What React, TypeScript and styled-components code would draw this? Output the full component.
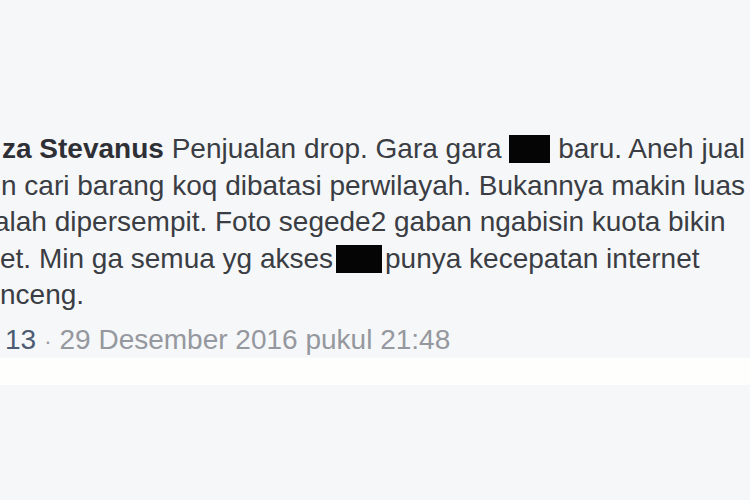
import styled, { createGlobalStyle } from "styled-components"

const GlobalStyle = createGlobalStyle`
  html, body {
    margin: 0;
    padding: 0;
    background: #f6f7f9;
  }
`

const Page = styled.div`
  width: 750px;
  height: 500px;
  overflow: hidden;
  background: #f6f7f9;
  display: flex;
  flex-direction: column;
  padding-top: 131px;
  box-sizing: border-box;
  font-family: "Liberation Sans", Arial, sans-serif;
`

const CommentBody = styled.div`
  display: flex;
  flex-direction: column;
  overflow: hidden;
  font-size: 28px;
  line-height: 36.5px;
  color: #3a3d43;
`

const Line = styled.div<{ indent?: number }>`
  white-space: nowrap;
  text-indent: ${(props) => `${props.indent ?? 0}px`};
`

const Author = styled.span`
  font-weight: bold;
  color: #2e3036;
`

// black boxes that hide a brand name in the screenshot
const Redacted = styled.span<{ w: number; gap: number }>`
  display: inline-block;
  width: ${(props) => `${props.w}px`};
  height: 28px;
  margin: 0 ${(props) => `${props.gap}px`};
  background: #050505;
  vertical-align: -5px;
`

const MetaRow = styled.div`
  display: flex;
  align-items: baseline;
  margin-top: 8px;
  padding-left: 5px;
  height: 36.5px;
  font-size: 28px;
  line-height: 36.5px;
  white-space: nowrap;
  color: #95989e;
`

const LikeCount = styled.span`
  color: #4d5c73;
`

const Dot = styled.span`
  padding: 0 8px;
  font-size: 22px;
`

const WhiteStrip = styled.div`
  height: 27px;
  background: #fefefc;
`

export default function App() {
  return (
    <>
      <GlobalStyle />
      <Page>
        <CommentBody>
          <Line indent={2}>
            <Author>za Stevanus</Author> Penjualan drop. Gara gara{" "}
            <Redacted w={41} gap={0} /> baru. Aneh jual
          </Line>
          <Line indent={1}>
            n cari barang koq dibatasi perwilayah. Bukannya makin luas
          </Line>
          <Line indent={-6}>
            alah dipersempit. Foto segede2 gaban ngabisin kuota bikin
          </Line>
          <Line>
            et. Min ga semua yg akses
            <Redacted w={46} gap={3} />
            punya kecepatan internet
          </Line>
          <Line>nceng.</Line>
        </CommentBody>
        <MetaRow>
          <LikeCount>13</LikeCount>
          <Dot>·</Dot>
          <span>29 Desember 2016 pukul 21:48</span>
        </MetaRow>
        <WhiteStrip />
      </Page>
    </>
  )
}
